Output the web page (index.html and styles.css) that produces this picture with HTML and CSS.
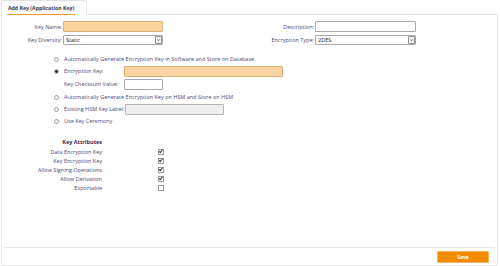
FILE: index.html
```html
<!DOCTYPE html>
<html lang="en">
<head>
    <meta charset="UTF-8">
    <meta name="viewport" content="width=device-width, initial-scale=1.0">
    <title>Add Key (Application Key)</title>
    <link rel="stylesheet" href="styles.css">
</head>
<body>
    <div class="tabs">
        <div class="tab"><span class="tab-title">Add Key (Application Key)</span></div>
        <div class="tab-fill"></div>
    </div>

    <div class="panel">
        <div class="panel-body">
            <div class="field-grid">
                <label class="field-label" for="keyName">Key Name:</label>
                <input type="text" id="keyName" class="text-input required">
                <label class="field-label" for="description">Description:</label>
                <input type="text" id="description" class="text-input">

                <label class="field-label" for="keyDiversity">Key Diversity:</label>
                <div class="select-wrap">
                    <select id="keyDiversity" class="select-input">
                        <option>Static</option>
                    </select>
                    <span class="select-btn"><svg viewBox="0 0 6 6" width="6" height="6"><path d="M1.5 2.3 L3 3.8 L4.5 2.3" fill="none" stroke="#333" stroke-width="0.9"/></svg></span>
                </div>
                <label class="field-label" for="encType">Encryption Type:</label>
                <div class="select-wrap">
                    <select id="encType" class="select-input">
                        <option>2DES</option>
                    </select>
                    <span class="select-btn"><svg viewBox="0 0 6 6" width="6" height="6"><path d="M1.5 2.3 L3 3.8 L4.5 2.3" fill="none" stroke="#333" stroke-width="0.9"/></svg></span>
                </div>
            </div>

            <div class="key-source">
                <div class="radio-row">
                    <input type="radio" name="source" id="src1">
                    <label for="src1">Automatically Generate Encryption Key in Software and Store on Database</label>
                </div>
                <div class="radio-row">
                    <input type="radio" name="source" id="src2" checked>
                    <label for="src2" class="fixed-label">Encryption Key:</label>
                    <input type="text" class="text-input required key-input">
                </div>
                <div class="radio-row sub-row">
                    <label class="fixed-label">Key Checksum Value:</label>
                    <input type="text" class="text-input checksum-input">
                </div>
                <div class="radio-row">
                    <input type="radio" name="source" id="src3">
                    <label for="src3">Automatically Generate Encryption Key on HSM and Store on HSM</label>
                </div>
                <div class="radio-row">
                    <input type="radio" name="source" id="src4">
                    <label for="src4">Existing HSM Key Label:</label>
                    <input type="text" class="text-input disabled hsm-input" disabled>
                </div>
                <div class="radio-row">
                    <input type="radio" name="source" id="src5">
                    <label for="src5">Use Key Ceremony</label>
                </div>
            </div>

            <div class="attributes">
                <div class="attr-title">Key Attributes</div>
                <div class="attr-row">
                    <label for="a1">Data Encryption Key</label>
                    <input type="checkbox" id="a1" checked>
                </div>
                <div class="attr-row">
                    <label for="a2">Key Encryption Key</label>
                    <input type="checkbox" id="a2" checked>
                </div>
                <div class="attr-row">
                    <label for="a3">Allow Signing Operations</label>
                    <input type="checkbox" id="a3" checked>
                </div>
                <div class="attr-row">
                    <label for="a4">Allow Derivation</label>
                    <input type="checkbox" id="a4" checked>
                </div>
                <div class="attr-row">
                    <label for="a5">Exportable</label>
                    <input type="checkbox" id="a5">
                </div>
            </div>
        </div>

        <div class="panel-footer">
            <button class="save-btn">Save</button>
        </div>
    </div>
</body>
</html>
```

FILE: styles.css
```css
body {
    margin: 0;
    padding: 0 2px 0 1px;
    font-family: "Open Sans", sans-serif;
    font-size: 5.5px;
    color: #4a4a78;
    background: #fff;
}

.tabs {
    display: flex;
    height: 15px;
}

.tab {
    width: 79px;
    border: 1px solid #e2e2e2;
    border-bottom: none;
    border-radius: 0 4px 0 0;
    padding: 0 0 0 5px;
    display: flex;
    align-items: flex-end;
}

.tab-title {
    font-weight: bold;
    font-size: 5.2px;
    color: #34344f;
    padding: 0 1px 2px;
    border-bottom: 1px solid #f39a1e;
    line-height: 7px;
}

.tab-fill {
    flex: 1;
    border-bottom: 1px solid #e2e2e2;
}

.panel {
    border: 1px solid #e2e2e2;
    border-top: none;
    border-radius: 0 0 3px 3px;
    height: 250px;
    display: flex;
    flex-direction: column;
}

.panel-body {
    flex: 1;
    padding-top: 6px;
}

.field-grid {
    display: grid;
    grid-template-columns: 60px 100px 150px 101px;
    column-gap: 1px;
    row-gap: 3px;
    align-items: center;
}

.field-label {
    text-align: right;
}

.text-input,
.select-input {
    box-sizing: border-box;
    font-family: inherit;
    font-size: 5.5px;
    border: 1px solid #a9a9a9;
    border-radius: 1px;
    margin: 0;
    background: #fff;
}

.text-input {
    height: 11px;
    padding: 0 2px;
}

.select-wrap {
    position: relative;
    height: 10px;
}

.select-input {
    appearance: none;
    width: 100%;
    height: 10px;
    padding: 0 2px;
    color: #222;
    display: block;
}

.select-btn {
    position: absolute;
    right: 1px;
    top: 1px;
    box-sizing: border-box;
    width: 7px;
    height: 8px;
    border: 1px solid #8e8e8e;
    border-radius: 1px;
    background: #f4f4f4;
    display: flex;
    align-items: center;
    justify-content: center;
}

.text-input.required {
    background: #fad39e;
    border-color: #d9b07a;
}

.text-input.disabled {
    background: #efefef;
    border-color: #b5b5b5;
}

.key-source {
    margin-top: 8px;
    padding-left: 52px;
}

.radio-row {
    display: flex;
    align-items: center;
    height: 12px;
}

.radio-row input[type="radio"] {
    appearance: none;
    box-sizing: border-box;
    width: 5px;
    height: 5px;
    margin: 0 5px 0 0;
    border: 1px solid #9a9a9a;
    border-radius: 50%;
    background: #fff;
}

.radio-row input[type="radio"]:checked {
    background: radial-gradient(circle, #333 0 1.2px, #fff 1.6px);
}

.fixed-label {
    width: 60px;
    flex-shrink: 0;
}

.key-input {
    width: 159px;
}

.sub-row {
    height: 14px;
    padding-left: 10px;
}

.sub-row .fixed-label {
    width: 60px;
}

.checksum-input {
    width: 39px;
}

.hsm-input {
    width: 99px;
    margin-left: 1px;
}

.attributes {
    margin-top: 10px;
}

.attr-title {
    width: 100px;
    text-align: right;
    font-weight: bold;
    color: #2e2e56;
    height: 10px;
    line-height: 10px;
}

.attr-row {
    display: flex;
    align-items: center;
    height: 9px;
}

.attr-row label {
    width: 100px;
    text-align: right;
}

.attr-row input[type="checkbox"] {
    appearance: none;
    box-sizing: border-box;
    position: relative;
    width: 6px;
    height: 6px;
    margin: 0 0 0 56px;
    border: 1px solid #9a9a9a;
    background: #fff;
}

.attr-row input[type="checkbox"]:checked::after {
    content: "";
    position: absolute;
    left: 1.2px;
    top: -0.5px;
    width: 1px;
    height: 2.6px;
    border: solid #333;
    border-width: 0 0.8px 0.8px 0;
    transform: rotate(40deg);
}

.panel-footer {
    border-top: 1px solid #e6e6e6;
    margin: 0 2px;
    height: 17px;
    display: flex;
    justify-content: flex-end;
    align-items: center;
}

.save-btn {
    width: 52px;
    height: 12px;
    margin-right: 6px;
    border: 1px solid #f6b35a;
    border-radius: 1px;
    background: #f28b00;
    color: #fff;
    font-family: inherit;
    font-size: 5px;
    font-weight: bold;
    padding: 0;
}
```
